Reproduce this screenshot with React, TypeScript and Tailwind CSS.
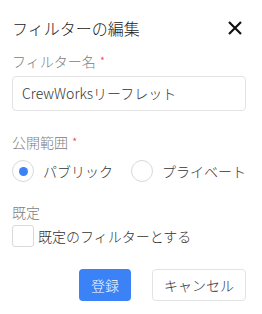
import React, { useState } from 'react';

const font = { fontFamily: '"Noto Sans CJK JP", "Noto Sans", sans-serif' };

function Label({ text, required }: { text: string; required?: boolean }) {
  return (
    <div className="flex items-center h-5 text-[14px] leading-5 text-[#808080]">
      <span>{text}</span>
      {required && <span className="ml-1 text-[#ef4444] text-[12px]">*</span>}
    </div>
  );
}

export default function App() {
  const [visibility, setVisibility] = useState<'public' | 'private'>('public');
  const [isDefault, setIsDefault] = useState(false);

  return (
    <div className="w-[262px] h-[314px] bg-white pl-3 pr-4 pt-4 font-light" style={font}>
      <div className="flex items-center justify-between h-6">
        <h2 className="text-[16px] leading-6 text-[#222]">フィルターの編集</h2>
        <svg width="14" height="14" viewBox="0 0 14 14" className="mr-1">
          <path d="M1 1 L13 13 M13 1 L1 13" stroke="#111" strokeWidth="2.2" />
        </svg>
      </div>

      <div className="mt-[11px]">
        <Label text="フィルター名" required />
      </div>
      <div className="mt-[5px] h-[35px] border border-[#e3e3e3] rounded-[4px] flex items-center px-[9px] text-[14px] text-[#333]">
        CrewWorksリーフレット
      </div>

      <div className="mt-[21px]">
        <Label text="公開範囲" required />
      </div>
      <div className="mt-2 flex items-center h-[22px] text-[14px] text-[#333]">
        <button className="flex items-center" onClick={() => setVisibility('public')}>
          <span className="w-[22px] h-[22px] rounded-full border border-[#d9d9d9] flex items-center justify-center">
            {visibility === 'public' && <span className="w-[9px] h-[9px] rounded-full bg-[#3b82f6]" />}
          </span>
          <span className="ml-[9px]">パブリック</span>
        </button>
        <button className="flex items-center ml-[18px]" onClick={() => setVisibility('private')}>
          <span className="w-[22px] h-[22px] rounded-full border border-[#d9d9d9] flex items-center justify-center">
            {visibility === 'private' && <span className="w-[9px] h-[9px] rounded-full bg-[#3b82f6]" />}
          </span>
          <span className="ml-[9px]">プライベート</span>
        </button>
      </div>

      <div className="mt-5">
        <Label text="既定" />
      </div>
      <button className="mt-[3px] flex items-center h-[22px] text-[14px] text-[#333]" onClick={() => setIsDefault(!isDefault)}>
        <span className="w-[22px] h-[22px] rounded-[3px] border border-[#d9d9d9] bg-white" />
        <span className="ml-1">既定のフィルターとする</span>
      </button>

      <div className="mt-[22px] flex justify-end gap-[21px]">
        <button className="w-[52px] h-8 rounded-[4px] bg-[#3b82f6] text-white text-[14px]">登録</button>
        <button className="w-[94px] h-8 rounded-[4px] border border-[#e3e3e3] bg-white text-[#333] text-[14px]">キャンセル</button>
      </div>
    </div>
  );
}
